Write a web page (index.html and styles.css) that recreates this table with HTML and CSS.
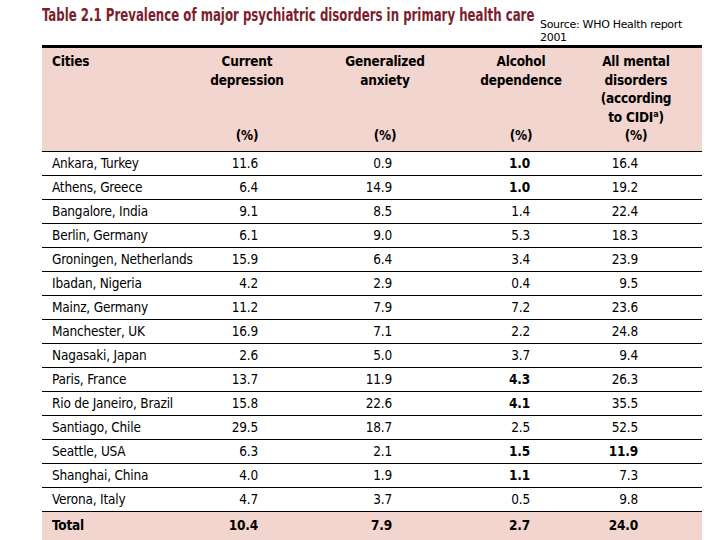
FILE: index.html
```html
<!DOCTYPE html>
<html>
<head>
    <meta charset="utf-8">
    <link rel="stylesheet" href="styles.css">
</head>
<body>
    <div class="top">
        <div class="title-box">
            <h1 class="title">Table 2.1 Prevalence of major psychiatric disorders in primary health care</h1>
        </div>
        <div class="source">Source: WHO Health report<br>2001</div>
    </div>
    <table class="data">
        <colgroup>
            <col class="c-city">
            <col class="c-dep">
            <col class="c-anx">
            <col class="c-alc">
            <col class="c-all">
        </colgroup>
        <thead>
            <tr class="labels">
                <th class="city">Cities</th>
                <th>Current<br>depression</th>
                <th>Generalized<br>anxiety</th>
                <th>Alcohol<br>dependence</th>
                <th class="last">All mental<br>disorders<br>(according<br>to CIDI<sup>a</sup>)</th>
            </tr>
            <tr class="units">
                <th></th>
                <th>(%)</th>
                <th>(%)</th>
                <th>(%)</th>
                <th class="last">(%)</th>
            </tr>
        </thead>
        <tbody>
            <tr><td>Ankara, Turkey</td><td class="dep">11.6</td><td class="anx">0.9</td><td class="alc b">1.0</td><td class="all">16.4</td></tr>
            <tr><td>Athens, Greece</td><td class="dep">6.4</td><td class="anx">14.9</td><td class="alc b">1.0</td><td class="all">19.2</td></tr>
            <tr><td>Bangalore, India</td><td class="dep">9.1</td><td class="anx">8.5</td><td class="alc">1.4</td><td class="all">22.4</td></tr>
            <tr><td>Berlin, Germany</td><td class="dep">6.1</td><td class="anx">9.0</td><td class="alc">5.3</td><td class="all">18.3</td></tr>
            <tr><td>Groningen, Netherlands</td><td class="dep">15.9</td><td class="anx">6.4</td><td class="alc">3.4</td><td class="all">23.9</td></tr>
            <tr><td>Ibadan, Nigeria</td><td class="dep">4.2</td><td class="anx">2.9</td><td class="alc">0.4</td><td class="all">9.5</td></tr>
            <tr><td>Mainz, Germany</td><td class="dep">11.2</td><td class="anx">7.9</td><td class="alc">7.2</td><td class="all">23.6</td></tr>
            <tr><td>Manchester, UK</td><td class="dep">16.9</td><td class="anx">7.1</td><td class="alc">2.2</td><td class="all">24.8</td></tr>
            <tr><td>Nagasaki, Japan</td><td class="dep">2.6</td><td class="anx">5.0</td><td class="alc">3.7</td><td class="all">9.4</td></tr>
            <tr><td>Paris, France</td><td class="dep">13.7</td><td class="anx">11.9</td><td class="alc b">4.3</td><td class="all">26.3</td></tr>
            <tr><td>Rio de Janeiro, Brazil</td><td class="dep">15.8</td><td class="anx">22.6</td><td class="alc b">4.1</td><td class="all">35.5</td></tr>
            <tr><td>Santiago, Chile</td><td class="dep">29.5</td><td class="anx">18.7</td><td class="alc">2.5</td><td class="all">52.5</td></tr>
            <tr><td>Seattle, USA</td><td class="dep">6.3</td><td class="anx">2.1</td><td class="alc b">1.5</td><td class="all b">11.9</td></tr>
            <tr><td>Shanghai, China</td><td class="dep">4.0</td><td class="anx">1.9</td><td class="alc b">1.1</td><td class="all">7.3</td></tr>
            <tr><td>Verona, Italy</td><td class="dep">4.7</td><td class="anx">3.7</td><td class="alc">0.5</td><td class="all">9.8</td></tr>
        </tbody>
        <tfoot>
            <tr><td>Total</td><td class="dep">10.4</td><td class="anx">7.9</td><td class="alc">2.7</td><td class="all">24.0</td></tr>
        </tfoot>
    </table>
</body>
</html>
```

FILE: styles.css
```css
* {
    margin: 0;
    padding: 0;
    box-sizing: border-box;
}

html, body {
    width: 100%;
    height: 100%;
    overflow: hidden;
}

body {
    background: #fff;
    font-family: "DejaVu Sans Condensed", "Liberation Sans", sans-serif;
    color: #000;
}

.top {
    height: 45px;
    display: flex;
    align-items: flex-start;
    padding-left: 42px;
}

.title-box {
    width: 498px;
    padding-top: 5px;
}

/* no narrow face installed, so squeeze the bold condensed one */
.title {
    display: inline-block;
    font-size: 17px;
    font-weight: bold;
    color: #7b1e2c;
    white-space: nowrap;
    transform: scaleX(0.77);
    transform-origin: left top;
}

.source {
    padding-top: 18px;
    font-family: "DejaVu Sans", sans-serif;
    font-size: 11px;
    line-height: 13px;
    letter-spacing: -0.3px;
}

.data {
    margin-left: 42px;
    width: 660px;
    border-collapse: collapse;
    table-layout: fixed;
    font-size: 13.5px;
    letter-spacing: -0.2px;
    border-top: 3px solid #000;
}

.c-city { width: 148px; }
.c-dep { width: 114px; }
.c-anx { width: 162px; }
.c-alc { width: 110px; }
.c-all { width: 126px; }

thead th {
    background: #f2d5ce;
    font-weight: bold;
    text-align: center;
    vertical-align: top;
    line-height: 18.5px;
}

thead th.city {
    text-align: left;
    padding-left: 10px;
}

thead th.last {
    padding-right: 6px;
}

.labels th {
    padding-top: 4px;
    height: 78px;
}

.units th {
    height: 25px;
    border-bottom: 1px solid #000;
}

sup {
    font-size: 9px;
    line-height: 0;
    vertical-align: 5px;
}

tbody td {
    height: 24px;
    border-bottom: 1px solid #000;
    vertical-align: middle;
    line-height: 18px;
}

td:first-child {
    padding-left: 10px;
    white-space: nowrap;
}

td.dep, td.anx, td.alc, td.all {
    text-align: right;
}

td.dep { padding-right: 46px; }
td.anx { padding-right: 74px; }
td.alc { padding-right: 46px; }
td.all { padding-right: 64px; }

td.b {
    font-weight: bold;
}

tfoot td {
    background: #f2d5ce;
    font-weight: bold;
    height: 40px;
    vertical-align: top;
    padding-top: 4px;
    line-height: 18px;
}
```
